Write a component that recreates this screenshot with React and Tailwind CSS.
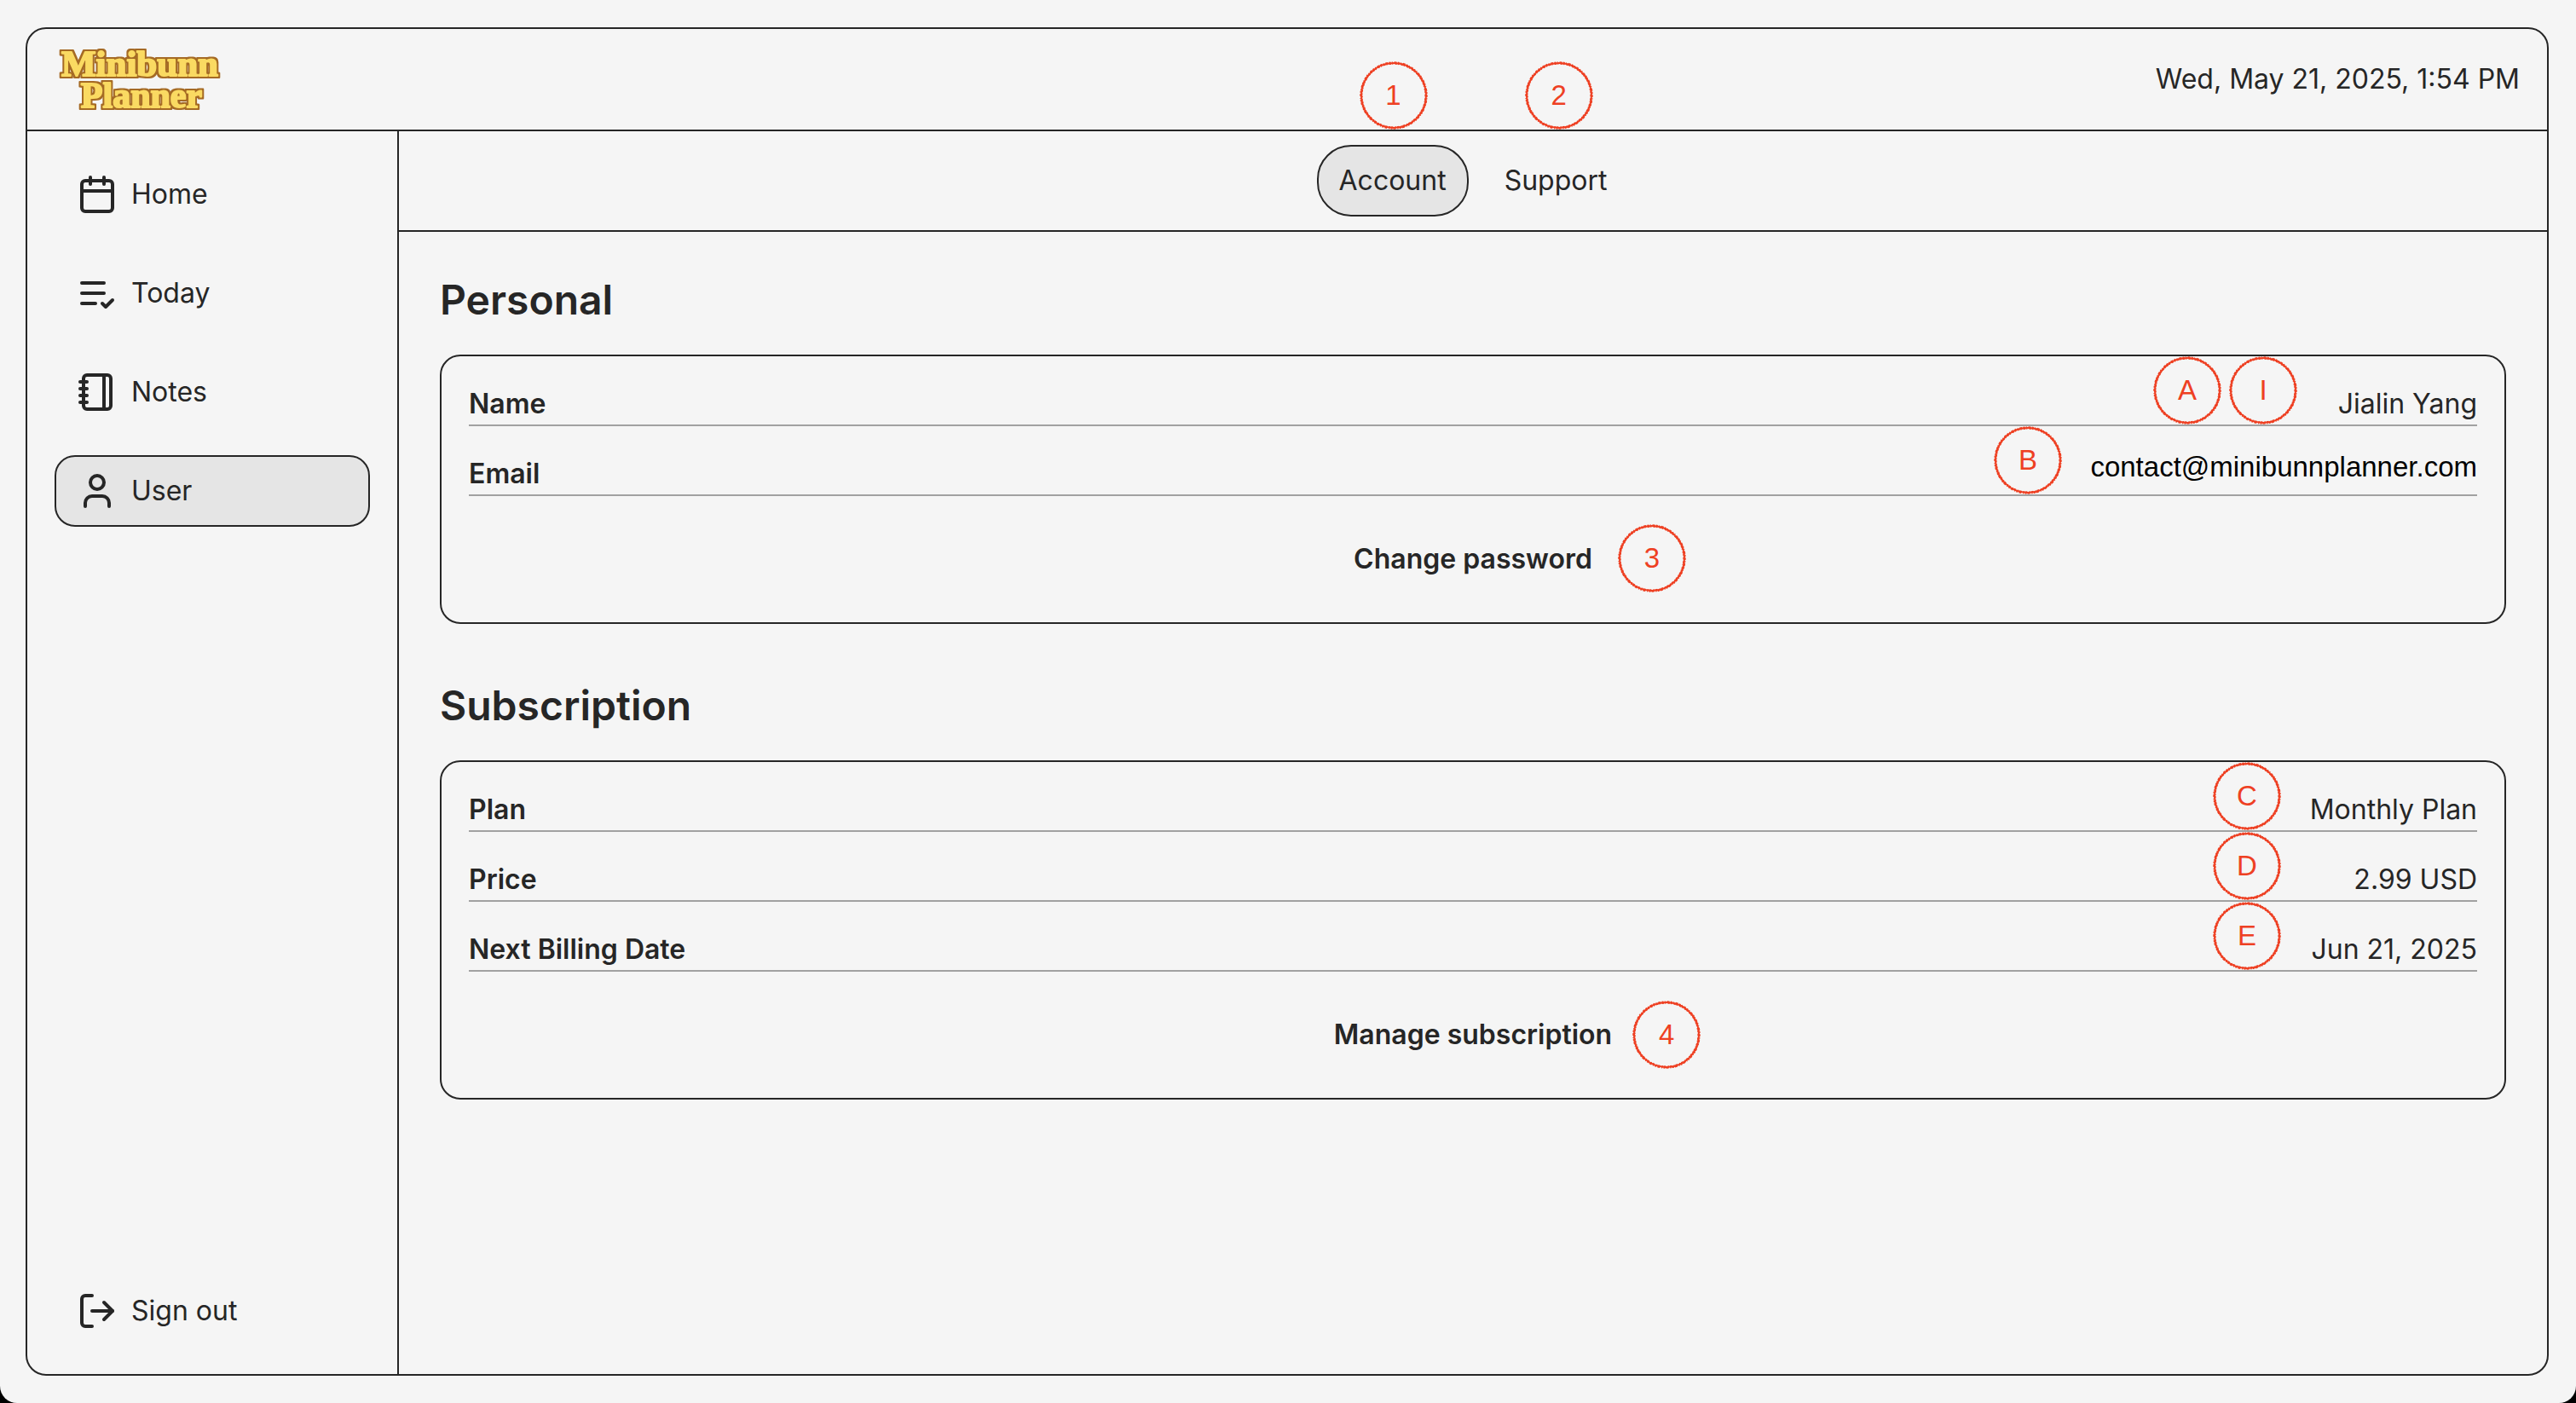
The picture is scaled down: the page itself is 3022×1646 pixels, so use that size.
import React from "react";
import { Calendar, Notebook, User, LogOut } from "lucide-react";

function TodayIcon({ className }) {
  return (
    <svg
      className={className}
      viewBox="0 0 24 24"
      fill="none"
      stroke="currentColor"
      strokeWidth="2"
      strokeLinecap="round"
      strokeLinejoin="round"
      aria-hidden="true"
    >
      <path d="M16 6H3M16 12H3M11 18H3" />
      <path d="m15 18 2 2 4-4" />
    </svg>
  );
}

function Logo() {
  return (
    <svg
      className="h-24 w-50"
      viewBox="0 0 200 96"
      role="img"
      aria-label="Minibunn Planner"
      fontFamily="'Liberation Serif', serif"
      fontWeight="700"
      textAnchor="middle"
      strokeLinejoin="round"
    >
      <defs>
        {/* Grows the lettering by two pixels and lays it, in brown, behind the yellow. */}
        <filter id="logo-outline" x="-5%" y="-20%" width="110%" height="140%" colorInterpolationFilters="sRGB">
          <feMorphology in="SourceAlpha" operator="dilate" radius="2" result="grown" />
          <feGaussianBlur in="grown" stdDeviation="0.4" result="soft" />
          <feFlood floodColor="#a56a24" />
          <feComposite in2="soft" operator="in" result="outline" />
          <feMerge>
            <feMergeNode in="outline" />
            <feMergeNode in="SourceGraphic" />
          </feMerge>
        </filter>
      </defs>
      <g fill="#fada62" stroke="#fada62" strokeWidth="2" filter="url(#logo-outline)">
        <text x="100" y="44" fontSize="43">Minibunn</text>
        <text x="102" y="81" fontSize="42">Planner</text>
      </g>
    </svg>
  );
}

/* Numbered callout with a rough, hand-inked ring. */
function Marker({ label, className }) {
  return (
    <span
      className={`absolute flex size-20 items-center justify-center font-['Liberation_Sans',sans-serif] text-[33px] leading-12 font-normal text-[#ee4023] ${className}`}
    >
      <svg className="absolute inset-0 size-full" viewBox="0 0 80 80" fill="none" stroke="currentColor" aria-hidden="true">
        <circle cx="40" cy="40" r="38" strokeWidth="2" />
        <circle cx="40" cy="40" r="38.4" strokeWidth="2.6" strokeDasharray="2 1.3 1 1.8 3 1.2" />
        <circle cx="40" cy="40" r="37.6" strokeWidth="2.4" strokeDasharray="1.4 2.1 2.4 1.1" />
      </svg>
      {label}
    </span>
  );
}

const navItems = [
  { label: "Home", Icon: Calendar },
  { label: "Today", Icon: TodayIcon },
  { label: "Notes", Icon: Notebook },
  { label: "User", Icon: User, active: true },
];

function NavLink({ label, Icon, active }) {
  return (
    <a
      href="#"
      aria-current={active ? "page" : undefined}
      className={`flex items-center gap-4 rounded-3xl border-2 px-6 py-4 ${
        active ? "border-neutral-800 bg-neutral-200" : "border-transparent"
      }`}
    >
      <Icon className="size-12" />
      {label}
    </a>
  );
}

function Tab({ label, active, marker }) {
  return (
    <a
      href="#"
      aria-current={active ? "page" : undefined}
      className={`relative rounded-[40px] border-2 px-6 py-4 ${
        active ? "border-neutral-800 bg-neutral-200" : "border-transparent"
      }`}
    >
      {label}
      <Marker label={marker} className="bottom-full left-12 mb-5" />
    </a>
  );
}

function Row({ label, children, markers }) {
  return (
    <div className="relative flex items-start justify-between border-b-2 border-neutral-400">
      <dt className="font-semibold">{label}</dt>
      <dd>{children}</dd>
      {markers}
    </div>
  );
}

function Section({ title, children, action, marker }) {
  return (
    <section className="flex flex-col gap-8">
      <h2 className="text-5xl leading-16 font-semibold">{title}</h2>
      <div className="flex flex-col gap-8 rounded-3xl border-2 border-neutral-800 p-8">
        <dl className="flex flex-col gap-8">{children}</dl>
        <button type="button" className="relative self-center rounded-3xl border-2 border-transparent px-6 py-4 font-semibold">
          {action}
          {marker}
        </button>
      </div>
    </section>
  );
}

export default function App() {
  return (
    <div className="bg-black font-['Inter',sans-serif] text-[32px] leading-12 text-neutral-800">
      <div className="flex min-h-screen flex-col rounded-b-[20px] bg-neutral-100 py-8 pr-8 pl-[30px]">
        <div className="flex grow flex-col rounded-3xl border-2 border-neutral-800">
          <header className="flex h-30 items-center justify-between border-b-2 border-neutral-800 px-8">
            <a href="#">
              <Logo />
            </a>
            <time dateTime="2025-05-21T13:54">Wed, May 21, 2025, 1:54 PM</time>
          </header>
          <div className="flex grow">
            <nav className="flex w-109 shrink-0 flex-col justify-between border-r-2 border-neutral-800 p-8">
              <div className="flex flex-col gap-8">
                {navItems.map((item) => (
                  <NavLink key={item.label} {...item} />
                ))}
              </div>
              <button type="button" className="flex items-center gap-4 border-2 border-transparent px-6 py-4">
                <LogOut className="size-12" />
                Sign out
              </button>
            </nav>
            <main className="grow">
              <div className="flex justify-center gap-4 border-b-2 border-neutral-800 py-4">
                <Tab label="Account" marker="1" active />
                <Tab label="Support" marker="2" />
              </div>
              <div className="flex flex-col gap-16 p-12">
                <Section
                  title="Personal"
                  action="Change password"
                  marker={<Marker label="3" className="-top-px left-full ml-1.5" />}
                >
                  <Row
                    label="Name"
                    markers={
                      <>
                        <Marker label="A" className="right-[300px] bottom-0" />
                        <Marker label="I" className="right-[211px] bottom-0" />
                      </>
                    }
                  >
                    Jialin Yang
                  </Row>
                  <Row label="Email" markers={<Marker label="B" className="right-[487px] bottom-0" />}>
                    <span className="block font-['Liberation_Sans',sans-serif] text-[33px] leading-8 text-black">
                      contact@minibunnplanner.com
                    </span>
                  </Row>
                </Section>
                <Section
                  title="Subscription"
                  action="Manage subscription"
                  marker={<Marker label="4" className="top-0 left-full" />}
                >
                  <Row label="Plan" markers={<Marker label="C" className="right-[230px] bottom-0" />}>
                    Monthly Plan
                  </Row>
                  <Row label="Price" markers={<Marker label="D" className="right-[230px] bottom-0" />}>
                    2.99 USD
                  </Row>
                  <Row label="Next Billing Date" markers={<Marker label="E" className="right-[230px] bottom-0" />}>
                    Jun 21, 2025
                  </Row>
                </Section>
              </div>
            </main>
          </div>
        </div>
      </div>
    </div>
  );
}
